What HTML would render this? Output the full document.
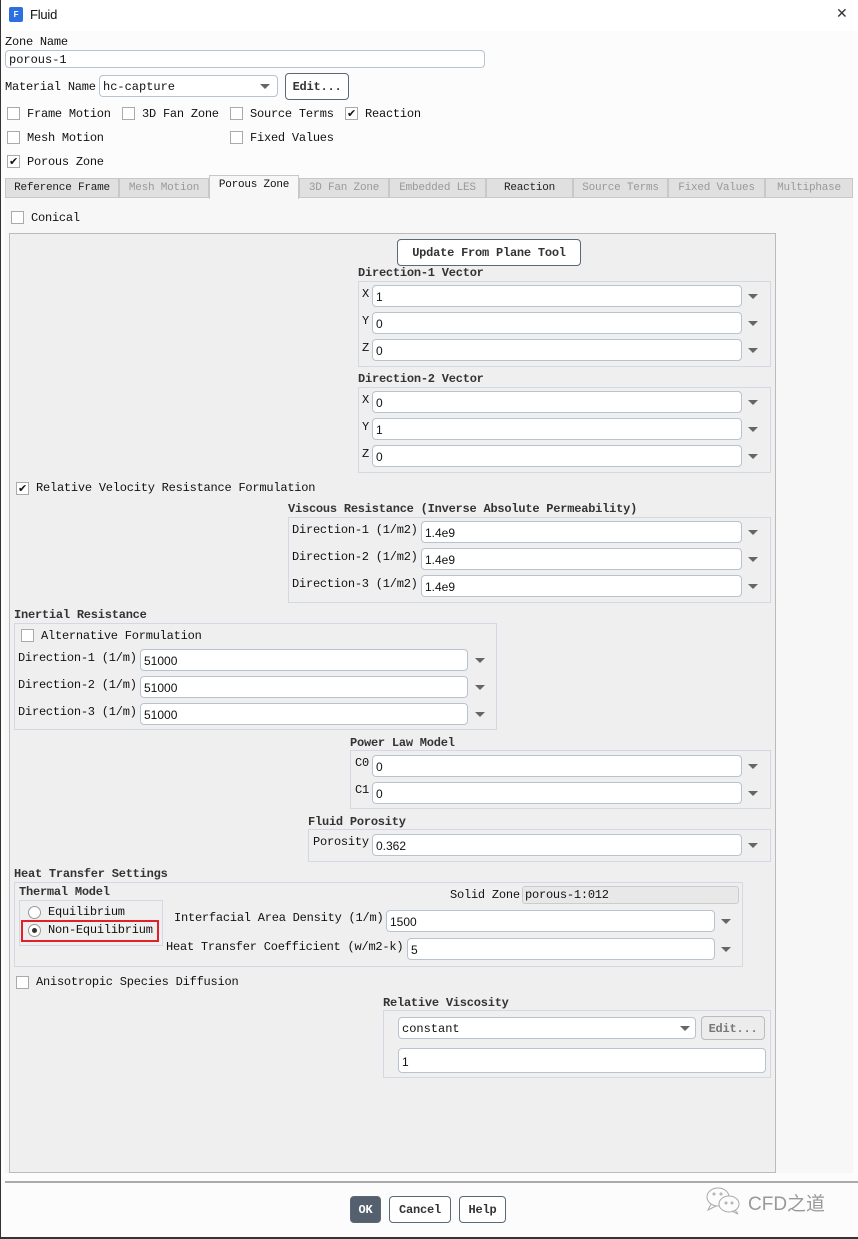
<!DOCTYPE html>
<html><head><meta charset="utf-8"><style>
*{box-sizing:border-box;margin:0;padding:0}
body{width:858px;height:1239px;position:relative;background:#fcfcfc;font-family:"Liberation Mono",monospace;font-size:12px;letter-spacing:-0.22px;color:#111;overflow:hidden}
.a{position:absolute;white-space:nowrap}
.b{font-weight:bold;color:#333}
.in{position:absolute;background:#fff;border:1px solid #b9c3cf;border-radius:4px;height:22px;font-family:"Liberation Sans",sans-serif;font-size:12px;letter-spacing:0;padding:4px 0 0 3px}
.gb{position:absolute;border:1px solid #d3d9e3}
.cb{position:absolute;width:13px;height:13px;border:1px solid #aaa;background:#fff;font-size:11px;line-height:11px;text-align:center;font-family:"DejaVu Sans",sans-serif}
.ar{position:absolute;width:0;height:0;border-left:5px solid transparent;border-right:5px solid transparent;border-top:5px solid #666}
.tab{position:absolute;top:178px;height:20px;background:#e0e0e0;border:1px solid #c8c8c8;text-align:center;font-size:11px;padding-top:3px;color:#999}
.btn{position:absolute;border:1px solid #5a6878;border-radius:4px;background:#fff;font-weight:bold;color:#333;text-align:center}
</style></head><body>
<div class="a" style="left:0;top:0;width:1px;height:1239px;background:#333"></div>
<div class="a" style="left:0;top:1237px;width:858px;height:2px;background:#333"></div>
<div class="a" style="left:1px;top:0;width:857px;height:31px;background:#fff"></div>
<div class="a" style="left:9px;top:7px;width:14px;height:15px;background:#2d6fe0;border-radius:2px;color:#fff;font:bold 8px 'Liberation Sans';text-align:center;line-height:15px">F</div>
<div class="a" style="left:30px;top:7px;font:13px 'Liberation Sans',sans-serif">Fluid</div>
<div class="a" style="left:836px;top:6px;font:14px 'DejaVu Sans',sans-serif;color:#333">✕</div>

<div class="a" style="left:5px;top:35px">Zone Name</div>
<div class="in" style="left:5px;top:50px;width:480px;height:18px;padding-top:2px;font-family:'Liberation Mono'">porous-1</div>
<div class="a" style="left:5px;top:80px">Material Name</div>
<div class="in" style="left:99px;top:75px;width:179px;font-family:'Liberation Mono'">hc-capture</div>
<div class="ar" style="left:260px;top:84px"></div>
<div class="btn" style="left:285px;top:73px;width:64px;height:27px;padding-top:6px">Edit...</div>

<div class="cb" style="left:7px;top:107px"></div><div class="a" style="left:27px;top:107px">Frame Motion</div>
<div class="cb" style="left:122px;top:107px"></div><div class="a" style="left:142px;top:107px">3D Fan Zone</div>
<div class="cb" style="left:230px;top:107px"></div><div class="a" style="left:250px;top:107px">Source Terms</div>
<div class="cb" style="left:345px;top:107px">✔</div><div class="a" style="left:365px;top:107px">Reaction</div>
<div class="cb" style="left:7px;top:131px"></div><div class="a" style="left:27px;top:131px">Mesh Motion</div>
<div class="cb" style="left:230px;top:131px"></div><div class="a" style="left:250px;top:131px">Fixed Values</div>
<div class="cb" style="left:7px;top:155px">✔</div><div class="a" style="left:27px;top:155px">Porous Zone</div>

<div class="tab" style="left:5px;width:114px;color:#222">Reference Frame</div>
<div class="tab" style="left:119px;width:90px">Mesh Motion</div>
<div class="tab" style="left:299px;width:90px">3D Fan Zone</div>
<div class="tab" style="left:389px;width:97px">Embedded LES</div>
<div class="tab" style="left:486px;width:87px;color:#222">Reaction</div>
<div class="tab" style="left:573px;width:95px">Source Terms</div>
<div class="tab" style="left:668px;width:97px">Fixed Values</div>
<div class="tab" style="left:765px;width:88px">Multiphase</div>
<div class="a" style="left:5px;top:198px;width:848px;height:975px;background:#f7f7f7"></div>
<div class="tab" style="left:209px;top:175px;width:90px;height:24px;background:#f7f7f7;border-bottom:none;color:#111">Porous Zone</div>

<div class="cb" style="left:11px;top:211px"></div><div class="a" style="left:31px;top:211px">Conical</div>
<div class="a" style="left:9px;top:233px;width:767px;height:940px;background:#efefef;border:1px solid #bbb"></div>

<div class="btn" style="left:397px;top:239px;width:184px;height:27px;padding-top:6px">Update From Plane Tool</div>
<div class="a b" style="left:358px;top:266px">Direction-1 Vector</div>
<div class="gb" style="left:358px;top:281px;width:413px;height:86px"></div>
<div class="a" style="left:362px;top:287px">X</div><div class="in" style="left:372px;top:285px;width:370px">1</div><div class="ar" style="left:748px;top:294px"></div>
<div class="a" style="left:362px;top:314px">Y</div><div class="in" style="left:372px;top:312px;width:370px">0</div><div class="ar" style="left:748px;top:321px"></div>
<div class="a" style="left:362px;top:341px">Z</div><div class="in" style="left:372px;top:339px;width:370px">0</div><div class="ar" style="left:748px;top:348px"></div>

<div class="a b" style="left:358px;top:372px">Direction-2 Vector</div>
<div class="gb" style="left:358px;top:387px;width:413px;height:86px"></div>
<div class="a" style="left:362px;top:393px">X</div><div class="in" style="left:372px;top:391px;width:370px">0</div><div class="ar" style="left:748px;top:400px"></div>
<div class="a" style="left:362px;top:420px">Y</div><div class="in" style="left:372px;top:418px;width:370px">1</div><div class="ar" style="left:748px;top:427px"></div>
<div class="a" style="left:362px;top:447px">Z</div><div class="in" style="left:372px;top:445px;width:370px">0</div><div class="ar" style="left:748px;top:454px"></div>

<div class="cb" style="left:16px;top:482px">✔</div><div class="a" style="left:36px;top:481px">Relative Velocity Resistance Formulation</div>
<div class="a b" style="left:288px;top:502px">Viscous Resistance (Inverse Absolute Permeability)</div>
<div class="gb" style="left:288px;top:517px;width:483px;height:86px"></div>
<div class="a" style="left:292px;top:523px">Direction-1 (1/m2)</div><div class="in" style="left:421px;top:521px;width:321px">1.4e9</div><div class="ar" style="left:748px;top:530px"></div>
<div class="a" style="left:292px;top:550px">Direction-2 (1/m2)</div><div class="in" style="left:421px;top:548px;width:321px">1.4e9</div><div class="ar" style="left:748px;top:557px"></div>
<div class="a" style="left:292px;top:577px">Direction-3 (1/m2)</div><div class="in" style="left:421px;top:575px;width:321px">1.4e9</div><div class="ar" style="left:748px;top:584px"></div>

<div class="a b" style="left:14px;top:608px">Inertial Resistance</div>
<div class="gb" style="left:14px;top:623px;width:483px;height:107px"></div>
<div class="cb" style="left:21px;top:629px"></div><div class="a" style="left:41px;top:629px">Alternative Formulation</div>
<div class="a" style="left:18px;top:651px">Direction-1 (1/m)</div><div class="in" style="left:140px;top:649px;width:328px">51000</div><div class="ar" style="left:475px;top:658px"></div>
<div class="a" style="left:18px;top:678px">Direction-2 (1/m)</div><div class="in" style="left:140px;top:676px;width:328px">51000</div><div class="ar" style="left:475px;top:685px"></div>
<div class="a" style="left:18px;top:705px">Direction-3 (1/m)</div><div class="in" style="left:140px;top:703px;width:328px">51000</div><div class="ar" style="left:475px;top:712px"></div>

<div class="a b" style="left:350px;top:736px">Power Law Model</div>
<div class="gb" style="left:350px;top:750px;width:421px;height:59px"></div>
<div class="a" style="left:355px;top:756px">C0</div><div class="in" style="left:372px;top:755px;width:370px">0</div><div class="ar" style="left:748px;top:764px"></div>
<div class="a" style="left:355px;top:783px">C1</div><div class="in" style="left:372px;top:782px;width:370px">0</div><div class="ar" style="left:748px;top:791px"></div>

<div class="a b" style="left:308px;top:815px">Fluid Porosity</div>
<div class="gb" style="left:308px;top:829px;width:463px;height:33px"></div>
<div class="a" style="left:313px;top:835px">Porosity</div><div class="in" style="left:372px;top:834px;width:370px">0.362</div><div class="ar" style="left:748px;top:843px"></div>

<div class="a b" style="left:14px;top:867px">Heat Transfer Settings</div>
<div class="gb" style="left:14px;top:882px;width:729px;height:85px"></div>
<div class="a b" style="left:19px;top:885px">Thermal Model</div>
<div class="gb" style="left:19px;top:900px;width:144px;height:46px"></div>
<div class="a" style="left:28px;top:906px;width:13px;height:13px;border:1px solid #999;border-radius:50%;background:#fff"></div>
<div class="a" style="left:48px;top:905px">Equilibrium</div>
<div class="a" style="left:28px;top:924px;width:13px;height:13px;border:1px solid #999;border-radius:50%;background:#fff"></div>
<div class="a" style="left:32px;top:928px;width:5px;height:5px;border-radius:50%;background:#333"></div>
<div class="a" style="left:48px;top:923px">Non-Equilibrium</div>
<div class="a" style="left:21px;top:920px;width:138px;height:22px;border:2px solid #e0202a"></div>
<div class="a" style="left:450px;top:888px">Solid Zone</div>
<div class="a" style="left:522px;top:886px;width:217px;height:18px;background:#e8e8e8;border:1px solid #ccc;border-radius:3px;padding:1px 2px">porous-1:012</div>
<div class="a" style="left:174px;top:911px">Interfacial Area Density (1/m)</div><div class="in" style="left:386px;top:910px;width:329px">1500</div><div class="ar" style="left:721px;top:919px"></div>
<div class="a" style="left:166px;top:940px">Heat Transfer Coefficient (w/m2-k)</div><div class="in" style="left:407px;top:938px;width:308px">5</div><div class="ar" style="left:721px;top:947px"></div>

<div class="cb" style="left:16px;top:976px"></div><div class="a" style="left:36px;top:975px">Anisotropic Species Diffusion</div>
<div class="a b" style="left:383px;top:996px">Relative Viscosity</div>
<div class="gb" style="left:383px;top:1010px;width:388px;height:68px"></div>
<div class="in" style="left:398px;top:1017px;width:298px;font-family:'Liberation Mono'">constant</div><div class="ar" style="left:680px;top:1026px"></div>
<div class="btn" style="left:701px;top:1016px;width:64px;height:24px;padding-top:5px;background:#ececec;border-color:#bbb;color:#777">Edit...</div>
<div class="in" style="left:398px;top:1048px;width:368px;height:25px;padding-top:6px">1</div>

<div class="a" style="left:5px;top:1181px;width:853px;height:2px;background:#aaa"></div>
<div class="btn" style="left:350px;top:1196px;width:31px;height:27px;padding-top:6px;background:#55606e;color:#fff">OK</div>
<div class="btn" style="left:389px;top:1196px;width:62px;height:27px;padding-top:6px">Cancel</div>
<div class="btn" style="left:459px;top:1196px;width:47px;height:27px;padding-top:6px">Help</div>
<svg class="a" style="left:705px;top:1186px" width="40" height="30" viewBox="0 0 40 30" fill="none" stroke="#aaa" stroke-width="1">
<ellipse cx="13" cy="11" rx="11" ry="9"/><path d="M6 18 L3 24 L11 20"/>
<ellipse cx="24" cy="18" rx="10" ry="8" fill="#fcfcfc"/><path d="M30 24 L33 28 L27 25"/>
<circle cx="9" cy="8" r="1"/><circle cx="16" cy="8" r="1"/><circle cx="21" cy="17" r="1"/><circle cx="27" cy="17" r="1"/>
</svg>
<div class="a" style="left:748px;top:1189px;font:19px 'Liberation Sans','Noto Sans CJK SC',sans-serif;color:#999;letter-spacing:0">CFD之道</div>
</body></html>
